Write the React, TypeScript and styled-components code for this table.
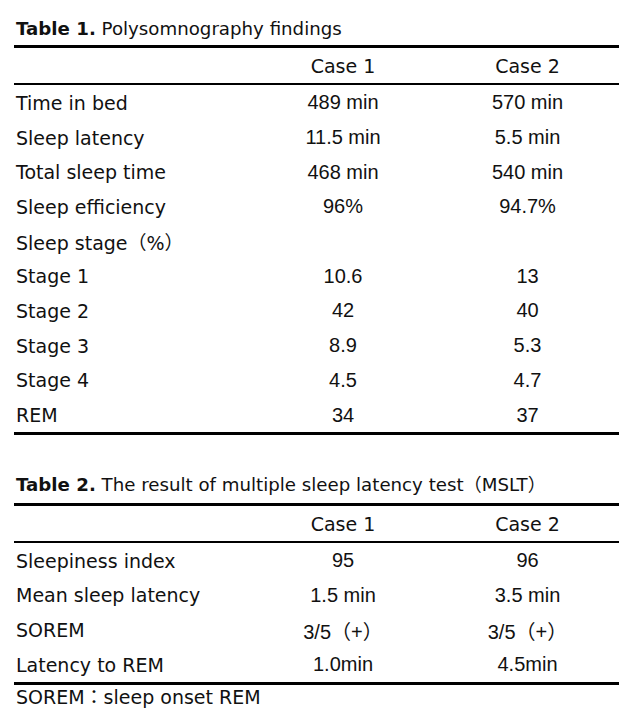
import React from "react";
import styled, { createGlobalStyle } from "styled-components";

const Global = createGlobalStyle`
  html, body { margin: 0; padding: 0; background: #ffffff; }
  body { font-family: "DejaVu Sans", "Noto Sans CJK KR", sans-serif; color: #111111; }
`;

const Page = styled.div`
  width: 605px;
  padding: 0 23px 0 14px;
  display: flex;
  flex-direction: column;
`;

const Caption = styled.div<{ $top: number; $bottom: number }>`
  font-size: 18.2px;
  line-height: 24px;
  padding-left: 2px;
  margin-top: ${(p) => p.$top}px;
  margin-bottom: ${(p) => p.$bottom}px;
  white-space: nowrap;
`;

const CaptionLabel = styled.b`
  font-weight: 700;
`;

const Table = styled.div`
  display: flex;
  flex-direction: column;
  border-top: 3px solid #000;
  border-bottom: 3px solid #000;
`;

const Row = styled.div<{ $head?: boolean }>`
  display: grid;
  grid-template-columns: 236px 186px 183px;
  align-items: center;
  box-sizing: border-box;
  height: ${(p) => (p.$head ? "37px" : "34.7px")};
  padding-top: 1px;
  border-bottom: ${(p) => (p.$head ? "2px solid #000" : "none")};
  font-size: 19px;
  white-space: nowrap;
`;

const Label = styled.div`
  padding-left: 2px;
`;

const Value = styled.div<{ $num?: boolean }>`
  text-align: center;
  font-family: ${(p) =>
    p.$num ? '"Liberation Sans", "Noto Sans CJK KR", sans-serif' : "inherit"};
  font-size: ${(p) => (p.$num ? "20px" : "inherit")};
`;

const Note = styled.div`
  font-size: 19px;
  line-height: 24px;
  padding-left: 2px;
`;

type R = [string, string, string];

const t1: R[] = [
  ["Time in bed", "489 min", "570 min"],
  ["Sleep latency", "11.5 min", "5.5 min"],
  ["Total sleep time", "468 min", "540 min"],
  ["Sleep efficiency", "96%", "94.7%"],
  ["Sleep stage（%）", "", ""],
  ["Stage 1", "10.6", "13"],
  ["Stage 2", "42", "40"],
  ["Stage 3", "8.9", "5.3"],
  ["Stage 4", "4.5", "4.7"],
  ["REM", "34", "37"],
];

const t2: R[] = [
  ["Sleepiness index", "95", "96"],
  ["Mean sleep latency", "1.5 min", "3.5 min"],
  ["SOREM", "3/5（+）", "3/5（+）"],
  ["Latency to REM", "1.0min", "4.5min"],
];

const DataTable = ({ rows }: { rows: R[] }) => (
  <Table>
    <Row $head>
      <Label />
      <Value>Case 1</Value>
      <Value>Case 2</Value>
    </Row>
    {rows.map((r) => (
      <Row key={r[0]}>
        <Label>{r[0]}</Label>
        <Value $num>{r[1]}</Value>
        <Value $num>{r[2]}</Value>
      </Row>
    ))}
  </Table>
);

export default function App() {
  return (
    <Page>
      <Global />
      <Caption $top={17} $bottom={4}>
        <CaptionLabel>Table 1.</CaptionLabel> Polysomnography findings
      </Caption>
      <DataTable rows={t1} />
      <Caption $top={38} $bottom={6}>
        <CaptionLabel>Table 2.</CaptionLabel> The result of multiple sleep latency test（MSLT）
      </Caption>
      <DataTable rows={t2} />
      <Note>SOREM：sleep onset REM</Note>
    </Page>
  );
}
